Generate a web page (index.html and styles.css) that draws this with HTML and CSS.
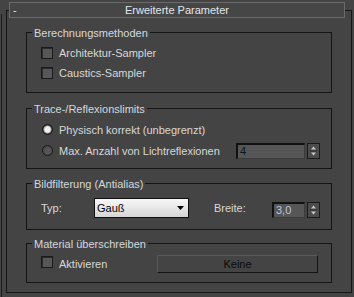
FILE: index.html
```html
<!DOCTYPE html>
<html lang="de">
<head>
<meta charset="utf-8">
<title>Erweiterte Parameter</title>
<link rel="stylesheet" href="styles.css">
</head>
<body>
<div class="page">
  <div class="edge"></div>
  <div class="rollout">
    <div class="rollout-head">
      <span class="toggle">-</span>
      <span class="rollout-title">Erweiterte Parameter</span>
      <span></span>
    </div>

    <section class="group g1">
      <div class="group-title">Berechnungsmethoden</div>
      <div class="row h20 first"><span class="check"></span><span>Architektur-Sampler</span></div>
      <div class="row h20"><span class="check"></span><span>Caustics-Sampler</span></div>
    </section>

    <section class="group g2">
      <div class="group-title">Trace-/Reflexionslimits</div>
      <div class="row h21 first"><span class="radio on"></span><span>Physisch korrekt (unbegrenzt)</span></div>
      <div class="row h21"><span class="radio"></span><span>Max. Anzahl von Lichtreflexionen</span>
        <div class="spin">
          <div class="spin-field wide disabled">4</div>
          <div class="spin-btn">
            <svg width="11" height="14" viewBox="0 0 11 14"><path d="M3 5.5h5L5.5 2.5z" fill="#c8c8c8"/><path d="M2 7h7" stroke="#2a2a2a" stroke-width="1"/><path d="M3 8.5h5L5.5 11.5z" fill="#c8c8c8"/></svg>
          </div>
        </div>
      </div>
    </section>

    <section class="group g3">
      <div class="group-title">Bildfilterung (Antialias)</div>
      <div class="row h20 filter-row">
        <span class="label-typ">Typ:</span>
        <div class="select"><span class="select-text">Gauß</span>
          <svg class="select-arrow" width="7" height="4" viewBox="0 0 7 4"><path d="M0 0h7L3.5 4z" fill="#000"/></svg>
        </div>
        <span class="label-breite">Breite:</span>
        <div class="spin end">
          <div class="spin-field narrow">3,0</div>
          <div class="spin-btn">
            <svg width="11" height="14" viewBox="0 0 11 14"><path d="M3 5.5h5L5.5 2.5z" fill="#c8c8c8"/><path d="M2 7h7" stroke="#2a2a2a" stroke-width="1"/><path d="M3 8.5h5L5.5 11.5z" fill="#c8c8c8"/></svg>
          </div>
        </div>
      </div>
    </section>

    <section class="group g4">
      <div class="group-title">Material überschreiben</div>
      <div class="row h18 mat-row"><span class="check up"></span><span>Aktivieren</span>
        <div class="btn">Keine</div>
      </div>
    </section>
  </div>
</div>
</body>
</html>
```

FILE: styles.css
```css
* { box-sizing: border-box; }

body {
  margin: 0;
  background: #444444;
  font-family: "Liberation Sans", Arial, sans-serif;
  font-size: 11px;
  line-height: 14px;
  color: #d8d8d8;
}

.page {
  display: flex;
  align-items: flex-start;
  height: 297px;
  overflow: hidden;
}

.edge {
  width: 1px;
  margin-left: 1px;
  margin-top: 14px;
  align-self: stretch;
  background: #1c1c1c;
}

.rollout {
  margin-left: 4px;
  margin-top: 10px;
  width: 346px;
  border: 1px solid #151515;
  padding-bottom: 9px;
}

.rollout-head {
  margin: -9px 6px 0 2px;
  height: 16px;
  border: 1px solid #6a6a6a;
  background: #464646;
  display: grid;
  grid-template-columns: 1fr auto 1fr;
  align-items: center;
  color: #e2e6ec;
}

.toggle { padding-left: 3px; }

.group {
  margin: 14px 19px 0;
  border: 1px solid #151515;
  padding: 0 11px 0 14px;
}

.group-title {
  margin: -7px 0 0 -9px;
  padding: 0 2px;
  width: max-content;
  background: #444444;
  color: #d4d8de;
}

.g1 { margin-top: 14px; padding-bottom: 9px; }
.g2 { margin-top: 15px; padding-bottom: 7px; }
.g3 { margin-top: 14px; padding-bottom: 11px; }
.g4 { margin-top: 13px; padding-bottom: 9px; }

.row {
  display: flex;
  align-items: center;
}
.row.first { margin-top: 3px; }
.h20 { height: 20px; }
.h21 { height: 21px; }
.h18 { height: 18px; }

.check {
  flex: none;
  width: 12px;
  height: 12px;
  margin-right: 6px;
  border: 1px solid #1a1a1a;
  background: #575757;
  box-shadow: inset 1px 1px 0 #2c2c2c;
}
.check.up { margin-bottom: 4px; }

.radio {
  flex: none;
  width: 11px;
  height: 11px;
  margin: 0 6px 0 1px;
  border-radius: 50%;
  border: 1px solid #181818;
  background: radial-gradient(circle at 55% 55%, #555 0 3px, #4a4a4a 4px);
}
.radio.on {
  background: radial-gradient(circle, #f2f2f2 0 2.5px, #b0b0b0 3.5px, #3c3c3c 4.5px);
}

.spin {
  display: flex;
  gap: 2px;
  height: 16px;
  margin-left: auto;
  flex: none;
}

.spin-field {
  border-top: 2px solid #111;
  border-left: 2px solid #111;
  border-right: 1px solid #3c3c3c;
  border-bottom: 1px solid #3c3c3c;
  background: #565656;
  padding-left: 2px;
  line-height: 13px;
  color: #b8c8e0;
}
.spin-field.wide { width: 69px; }
.spin-field.narrow { width: 33px; }
.spin-field.disabled { color: #0c1422; }

.spin-btn {
  width: 13px;
  border: 1px solid #1a1a1a;
  background: #4c4c4c;
  display: flex;
}

.filter-row { margin-top: 7px; }

.label-typ { width: 53px; flex: none; }

.select {
  flex: none;
  width: 95px;
  height: 20px;
  border: 1px solid #111;
  background: linear-gradient(#f7f7f7, #d6d6d6);
  color: #000;
  display: flex;
  align-items: center;
  padding: 0 4px 0 2px;
}
.select-text { flex: 1; }
.select-arrow { flex: none; }

.label-breite { margin-left: 25px; }

.spin.end { align-self: flex-end; }

.mat-row { margin-top: 4px; }

.btn {
  margin-left: auto;
  margin-right: 2px;
  width: 161px;
  height: 18px;
  border: 1px solid;
  border-color: #5a5a5a #141414 #141414 #5a5a5a;
  color: #0a0a0a;
  text-align: center;
  line-height: 16px;
}
```
